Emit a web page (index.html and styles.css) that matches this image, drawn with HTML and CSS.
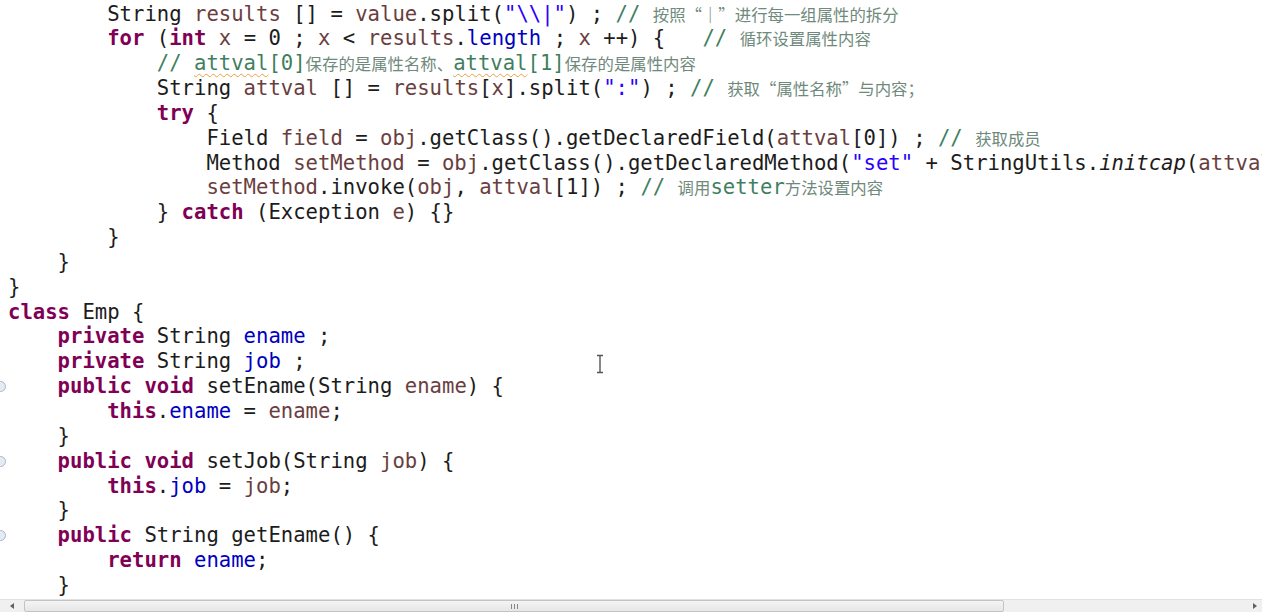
FILE: index.html
```html
<!DOCTYPE html>
<html lang="en">

<head>
    <meta charset="UTF-8">
    <meta name="viewport" content="width=device-width, initial-scale=1.0">
    <title>Emp.java</title>
    <link rel="stylesheet" href="styles.css">
</head>

<body>

    <div class="editor">
        <div class="code">
            <div class="line">        String <span class="var">results</span> [] = <span class="var">value</span>.split(<span class="str">"\\|"</span>) ; <span class="cm">// <span class="zh" lang="zh-CN">按照“|”进行每一组属性的拆分</span></span></div>
            <div class="line">        <span class="kw">for</span> (<span class="kw">int</span> <span class="var">x</span> = 0 ; <span class="var">x</span> &lt; <span class="var">results</span>.<span class="fld">length</span> ; <span class="var">x</span> ++) {   <span class="cm">// <span class="zh" lang="zh-CN">循环设置属性内容</span></span></div>
            <div class="line">            <span class="cm">// <span class="spell">attval</span>[0]<span class="zh" lang="zh-CN">保存的是属性名称、</span><span class="spell">attval</span>[1]<span class="zh" lang="zh-CN">保存的是属性内容</span></span></div>
            <div class="line">            String <span class="var">attval</span> [] = <span class="var">results</span>[<span class="var">x</span>].split(<span class="str">":"</span>) ; <span class="cm">// <span class="zh" lang="zh-CN">获取“属性名称”与内容；</span></span></div>
            <div class="line">            <span class="kw">try</span> {</div>
            <div class="line">                Field <span class="var">field</span> = <span class="var">obj</span>.getClass().getDeclaredField(<span class="var">attval</span>[0]) ; <span class="cm">// <span class="zh" lang="zh-CN">获取成员</span></span></div>
            <div class="line">                Method <span class="var">setMethod</span> = <span class="var">obj</span>.getClass().getDeclaredMethod(<span class="str">"set"</span> + StringUtils.<i>initcap</i>(<span class="var">attval</span>[0]), <span class="var">field</span>.getType()) ;</div>
            <div class="line">                <span class="var">setMethod</span>.invoke(<span class="var">obj</span>, <span class="var">attval</span>[1]) ; <span class="cm">// <span class="zh" lang="zh-CN">调用</span>setter<span class="zh" lang="zh-CN">方法设置内容</span></span></div>
            <div class="line">            } <span class="kw">catch</span> (Exception <span class="var">e</span>) {}</div>
            <div class="line">        }</div>
            <div class="line">    }</div>
            <div class="line">}</div>
            <div class="line"><span class="kw">class</span> Emp {</div>
            <div class="line">    <span class="kw">private</span> String <span class="fld">ename</span> ;</div>
            <div class="line">    <span class="kw">private</span> String <span class="fld">job</span> ;</div>
            <div class="line fold">    <span class="kw">public</span> <span class="kw">void</span> setEname(String <span class="var">ename</span>) {</div>
            <div class="line">        <span class="kw">this</span>.<span class="fld">ename</span> = <span class="var">ename</span>;</div>
            <div class="line">    }</div>
            <div class="line fold">    <span class="kw">public</span> <span class="kw">void</span> setJob(String <span class="var">job</span>) {</div>
            <div class="line">        <span class="kw">this</span>.<span class="fld">job</span> = <span class="var">job</span>;</div>
            <div class="line">    }</div>
            <div class="line fold">    <span class="kw">public</span> String getEname() {</div>
            <div class="line">        <span class="kw">return</span> <span class="fld">ename</span>;</div>
            <div class="line">    }</div>

            <!-- text cursor -->
            <svg class="ibeam" width="10" height="20" viewBox="0 0 10 20">
                <path d="M2 1.5h6M2 18.5h6M5 1.5v17" stroke="#555" stroke-width="1.4" fill="none"/>
            </svg>
        </div>

        <div class="hscroll">
            <span class="arrow left"></span>
            <div class="track">
                <div class="thumb"><span class="grip"></span></div>
            </div>
            <span class="arrow right"></span>
        </div>
    </div>

</body>

</html>
```

FILE: styles.css
```css
body {
    margin: 0;
    background-color: #fff;
    overflow: hidden;
}

.editor {
    display: flex;
    flex-direction: column;
    width: 1262px;
    height: 612px;
}

.code {
    position: relative;
    flex: 1;
    overflow: hidden;
    padding-left: 8px;
    padding-top: 1.5px;
    font-family: "DejaVu Sans Mono", "Liberation Mono", monospace;
    font-size: 20.6px;
    color: #1c1c1c;
}

.line {
    position: relative;
    height: 24.85px;
    line-height: 24.85px;
    white-space: pre;
}

.kw {
    color: #7f0055;
    font-weight: bold;
}

.var {
    color: #6a3e3e;
}

.fld {
    color: #0000c0;
}

.str {
    color: #2a00ff;
}

.cm {
    color: #3f7f5f;
}

.zh {
    font-family: "Noto Sans CJK SC", sans-serif;
    font-size: 16.4px;
    font-feature-settings: "fwid";
    color: #6f8a7c;
}

.spell {
    text-decoration: underline wavy #e8a040;
    text-decoration-thickness: 1px;
    text-underline-offset: 3px;
}

.fold::before {
    content: "";
    position: absolute;
    left: -13px;
    top: 7px;
    width: 9px;
    height: 9px;
    border: 1px solid #a9b8cc;
    border-radius: 50%;
    background: #e4ebf3;
}

.ibeam {
    position: absolute;
    left: 595px;
    top: 354px;
}

.hscroll {
    display: flex;
    align-items: center;
    height: 12px;
    background: #f0f0f0;
    border-top: 1px solid #e2e2e2;
}

.arrow {
    width: 24px;
    display: flex;
    justify-content: center;
}

.arrow::before {
    content: "";
    border-top: 3px solid transparent;
    border-bottom: 3px solid transparent;
}

.arrow.left::before {
    border-right: 4px solid #606060;
}

.arrow.right {
    width: 14px;
}

.arrow.right::before {
    border-left: 4px solid #606060;
}

.track {
    flex: 1;
    height: 100%;
}

.thumb {
    display: flex;
    justify-content: center;
    align-items: center;
    width: 978px;
    height: 10px;
    border: 1px solid #c4c4c4;
    border-radius: 2px;
    background: linear-gradient(#f4f4f4, #e6e6e6);
}

.grip {
    width: 5px;
    height: 5px;
    border-left: 1px solid #888;
    border-right: 1px solid #888;
    position: relative;
}

.grip::after {
    content: "";
    position: absolute;
    left: 2px;
    top: 0;
    width: 1px;
    height: 5px;
    background: #888;
}
```
